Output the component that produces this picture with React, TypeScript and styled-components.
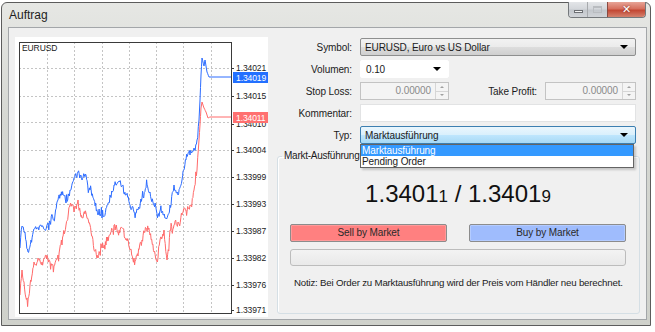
import React from "react";
import styled, { createGlobalStyle } from "styled-components";

const GlobalStyle = createGlobalStyle`
  html, body {
    margin: 0;
    padding: 0;
    background: #ffffff;
  }
  body {
    font-family: "Liberation Sans", Arial, sans-serif;
    font-size: 10px;
    letter-spacing: -0.1px;
    color: #1b1b1b;
  }
  * {
    box-sizing: border-box;
  }
`;

const Window = styled.div`
  width: 650px;
  height: 324px;
  margin: 2px 0 0 1px;
  border: 1px solid #5c5c5c;
  border-radius: 6px 6px 0 0;
  background: linear-gradient(180deg, #e6e7e4 0%, #d6d8d3 35%, #cfd1cb 100%);
  display: flex;
  flex-direction: column;
  padding: 0 3px 5px 6px;
`;

const TitleBar = styled.div`
  height: 24px;
  display: flex;
  align-items: flex-start;
  flex-shrink: 0;
`;

const Title = styled.span`
  font-size: 12px;
  line-height: 14px;
  letter-spacing: 0;
  padding: 5px 0 0 1px;
  color: #1e1e1e;
`;

const CaptionButtons = styled.div`
  margin: -1px 1px 0 auto;
  display: flex;
  height: 16px;
  border: 1px solid #74787b;
  border-top: none;
  border-radius: 0 0 4px 4px;
  overflow: hidden;
`;

const CaptionButton = styled.div<{ $close?: boolean; $w: number }>`
  width: ${({ $w }) => $w}px;
  height: 100%;
  display: flex;
  align-items: center;
  justify-content: center;
  border-left: ${({ $close }) => ($close ? "1px solid #8a4a40" : "1px solid #a7aaad")};
  background: ${({ $close }) =>
    $close
      ? "linear-gradient(180deg, #e7a497 0%, #d6705e 45%, #c34733 55%, #d4826e 100%)"
      : "linear-gradient(180deg, #e3e5e8 0%, #d4d7db 45%, #c3c7cc 55%, #d1d4d8 100%)"};
  &:first-child {
    border-left: none;
  }
`;

const MinGlyph = styled.span`
  width: 9px;
  height: 3px;
  margin-top: 4px;
  background: #f4f4f4;
  border: 1px solid #6c6f73;
`;

const MaxGlyph = styled.span`
  width: 9px;
  height: 7px;
  border: 1px solid #b9bcc0;
  border-top-width: 2px;
`;

const CloseGlyph = styled.span`
  color: #ffffff;
  font-family: "DejaVu Sans", sans-serif;
  font-weight: bold;
  font-size: 11px;
  line-height: 11px;
  text-shadow: 0 0 2px #7a2418;
`;

const Client = styled.div`
  flex: 1;
  min-width: 0;
  display: flex;
  background: #f0f0f0;
  border: 1px solid #a3a6a9;
`;

const ChartPanel = styled.div`
  width: 253px;
  height: 280px;
  margin: 9px 0 0 6px;
  background: #ffffff;
  flex-shrink: 0;
`;

const FormPanel = styled.div`
  flex: 1;
  min-width: 0;
  display: flex;
  flex-direction: column;
  padding: 10px 6px 0 9px;
`;

const FormGrid = styled.div`
  display: grid;
  grid-template-columns: 75px minmax(0, 1fr);
  grid-auto-rows: 18px;
  column-gap: 8px;
  row-gap: 4px;
  margin-right: 4px;
`;

const Label = styled.label`
  display: flex;
  align-items: center;
  justify-content: flex-end;
  white-space: nowrap;
  color: #1b1b1b;
`;

const Combo = styled.div<{ $focus?: boolean; $w?: number }>`
  position: relative;
  width: ${({ $w }) => ($w ? `${$w}px` : "100%")};
  height: 18px;
  display: flex;
  align-items: center;
  padding: 0 4px;
  border: 1px solid ${({ $focus }) => ($focus ? "#3c7fb1" : "#8e8f8f")};
  border-radius: 2px;
  background: ${({ $focus }) =>
    $focus
      ? "linear-gradient(180deg, #eaf6fd 0%, #d9f0fc 50%, #bee6fd 51%, #a7d9f5 100%)"
      : "linear-gradient(180deg, #f2f2f2 0%, #ebebeb 50%, #dddddd 51%, #cfcfcf 100%)"};
`;

const PlainCombo = styled(Combo)`
  border-color: #ffffff;
  background: #ffffff;
  padding-left: 5px;
`;

const Arrow = styled.span`
  margin-left: auto;
  margin-right: 3px;
  width: 0;
  height: 0;
  border-left: 4px solid transparent;
  border-right: 4px solid transparent;
  border-top: 4px solid #000000;
`;

const DropList = styled.div`
  position: absolute;
  top: 17px;
  left: -1px;
  right: 1px;
  background: #ffffff;
  border: 1px solid #646464;
  box-shadow: 2px 2px 2px rgba(0, 0, 0, 0.18);
  z-index: 5;
`;

const DropItem = styled.div<{ $active?: boolean }>`
  height: 11px;
  line-height: 11px;
  padding-left: 1px;
  color: ${({ $active }) => ($active ? "#ffffff" : "#1b1b1b")};
  background: ${({ $active }) => ($active ? "#3399ff" : "transparent")};
`;

const SpinRow = styled.div`
  display: flex;
  align-items: center;
  gap: 8px;
`;

const SpinInput = styled.div<{ $w: number }>`
  width: ${({ $w }) => $w}px;
  height: 18px;
  display: flex;
  border: 1px solid #c3c3c3;
  background: #f4f4f4;
  flex-shrink: 0;
`;

const SpinValue = styled.span`
  flex: 1;
  text-align: right;
  padding-right: 4px;
  line-height: 16px;
  color: #8a8a8a;
`;

const SpinButtons = styled.div`
  width: 13px;
  display: flex;
  flex-direction: column;
  border-left: 1px solid #d6d6d6;
`;

const SpinHalf = styled.div<{ $down?: boolean }>`
  flex: 1;
  display: flex;
  align-items: center;
  justify-content: center;
  border-top: ${({ $down }) => ($down ? "1px solid #d6d6d6" : "none")};
  &::after {
    content: "";
    border-left: 2px solid transparent;
    border-right: 2px solid transparent;
    ${({ $down }) => ($down ? "border-top: 2px solid #a0a0a0;" : "border-bottom: 2px solid #a0a0a0;")}
  }
`;

const InlineLabel = styled(Label)`
  flex: 1;
  height: 18px;
`;

const TextInput = styled.div`
  height: 18px;
  background: #ffffff;
  border: 1px solid #e2e3e4;
`;

const Group = styled.fieldset`
  margin: 6px 0 0 0;
  padding: 0 13px 0 12px;
  min-width: 0;
  border: 1px solid #d5dfe5;
  border-radius: 3px;
  box-shadow: inset 1px 1px 0 #ffffff;
  height: 164px;
  display: flex;
  flex-direction: column;
`;

const Legend = styled.legend`
  padding: 0 2px;
  margin-left: -8px;
  line-height: 12px;
  letter-spacing: -0.25px;
  color: #1b1b1b;
`;

const Price = styled.div`
  margin-top: 19px;
  text-align: center;
  font-size: 24px;
  line-height: 26px;
  letter-spacing: 0;
  color: #111111;
`;

const PriceTail = styled.span`
  font-size: 17px;
`;

const ButtonRow = styled.div`
  margin-top: 14px;
  display: flex;
  justify-content: space-between;
`;

const TradeButton = styled.div<{ $kind: "sell" | "buy" }>`
  width: 157px;
  height: 18px;
  line-height: 16px;
  text-align: center;
  border: 1px solid #8c8c8c;
  border-radius: 2px;
  color: #2a2a2a;
  background: ${({ $kind }) => ($kind === "sell" ? "#ff8080" : "#9fbcfd")};
  box-shadow: inset 0 0 0 1px ${({ $kind }) => ($kind === "sell" ? "#ff9a9a" : "#b4ccff")};
`;

const Progress = styled.div`
  margin-top: 7px;
  height: 17px;
  border: 1px solid #bcbcbc;
  border-radius: 3px;
  background: linear-gradient(180deg, #f3f3f3 0%, #e9e9e9 100%);
`;

const Note = styled.div`
  margin: 11px 0 0 4px;
  font-size: 9.7px;
  line-height: 12px;
  white-space: nowrap;
  letter-spacing: -0.2px;
  color: #1b1b1b;
`;

// chart data: hand-traced key points, roughened with a seeded jitter
const blueKeys: [number, number][] = [
  [20, 248], [22, 226], [25, 232], [28, 252], [31, 240], [35, 228], [40, 226], [45, 230],
  [50, 222], [55, 215], [58, 200], [62, 195], [66, 203], [70, 190], [74, 178], [78, 172],
  [82, 180], [86, 175], [90, 190], [94, 200], [98, 215], [102, 218], [106, 208], [110, 195],
  [114, 185], [118, 182], [122, 186], [126, 195], [130, 205], [134, 212], [138, 210], [142, 198],
  [146, 188], [150, 192], [154, 205], [158, 215], [162, 212], [166, 218], [170, 205], [174, 185],
  [178, 195], [182, 180], [186, 160], [190, 155], [194, 148], [197, 140], [199, 120], [200, 100],
  [201, 75], [202, 58], [204, 66], [205, 60], [207, 72], [209, 77], [232, 77],
];

const redKeys: [number, number][] = [
  [20, 295], [22, 270], [24, 282], [27, 298], [30, 285], [34, 262], [38, 258], [42, 262],
  [46, 255], [50, 262], [54, 266], [58, 255], [62, 245], [66, 225], [70, 205], [74, 212],
  [78, 200], [82, 218], [86, 213], [90, 225], [94, 250], [98, 258], [102, 248], [106, 245],
  [110, 235], [114, 225], [118, 232], [122, 228], [126, 240], [130, 250], [134, 258], [138, 256],
  [142, 240], [146, 228], [150, 235], [154, 252], [158, 258], [160, 240], [164, 230], [167, 260],
  [170, 230], [174, 225], [178, 222], [182, 215], [186, 210], [190, 205], [194, 190], [197, 170],
  [199, 140], [200, 125], [201, 108], [202, 102], [204, 108], [206, 112], [208, 118], [210, 117],
  [232, 117],
];

const seeded = (seed: number) => () => {
  seed = (seed * 16807) % 2147483647;
  return seed / 2147483647;
};

const buildLine = (keys: [number, number][], seed: number) => {
  const rnd = seeded(seed);
  const pts: string[] = [];
  let drift = 0;
  for (let i = 0; i < keys.length - 1; i++) {
    const [x0, y0] = keys[i];
    const [x1, y1] = keys[i + 1];
    const steps = x1 - x0 > 12 ? 1 : Math.max(2, Math.round((x1 - x0) / 0.6));
    for (let s = 0; s < steps; s++) {
      const t = s / steps;
      const x = x0 + (x1 - x0) * t;
      let jitter = 0;
      if (x < 198 && s > 0) {
        drift = drift * 0.6 + (rnd() - 0.5) * 7;
        jitter = drift + (rnd() < 0.12 ? (rnd() - 0.5) * 14 : 0);
      }
      pts.push(`${x.toFixed(1)},${(y0 + (y1 - y0) * t + jitter).toFixed(1)}`);
    }
  }
  const last = keys[keys.length - 1];
  pts.push(`${last[0]},${last[1]}`);
  return pts.join(" ");
};

const gridY = [68, 96, 122, 150, 177, 204, 231, 258, 285];
const gridX = [47, 74, 102, 129, 156, 183, 211];
const axisLabels: [number, string][] = [
  [68, "1.34021"], [96, "1.34015"], [124, "1.34010"], [150, "1.34004"], [177, "1.33999"],
  [204, "1.33993"], [231, "1.33987"], [258, "1.33982"], [285, "1.33976"], [310, "1.33971"],
];

const Chart = () => {
  const blue = buildLine(blueKeys, 7);
  const red = buildLine(redKeys, 13);
  return (
    <svg width="253" height="280" viewBox="15 37 253 280" fontFamily="Liberation Sans, Arial, sans-serif">
      {gridY.map((y) => (
        <line key={`h${y}`} x1="19" x2="231" y1={y + 0.5} y2={y + 0.5} stroke="#c4c4c4" strokeDasharray="2 2" />
      ))}
      {gridX.map((x) => (
        <line key={`v${x}`} x1={x + 0.5} x2={x + 0.5} y1="42" y2="313" stroke="#c4c4c4" strokeDasharray="2 2" />
      ))}
      <polyline points={red} fill="none" stroke="#ff6a6a" strokeWidth="1" />
      <polyline points={blue} fill="none" stroke="#2c6cff" strokeWidth="1" />
      <rect x="19.5" y="42.5" width="212" height="271" fill="none" stroke="#3a3a3a" />
      <text x="22" y="51" fontSize="8.5" fill="#1b1b1b">EURUSD</text>
      {axisLabels.map(([y, t]) => (
        <g key={t}>
          <line x1="231" x2="234" y1={y + 0.5} y2={y + 0.5} stroke="#3a3a3a" />
          <text x="236" y={y + 3} fontSize="8.5" fill="#222">{t}</text>
        </g>
      ))}
      <rect x="233" y="72" width="35" height="11" fill="#2370ff" />
      <text x="236" y="80.5" fontSize="8.5" fill="#ffffff">1.34019</text>
      <rect x="233" y="112" width="35" height="11" fill="#ff7070" />
      <text x="236" y="120.5" fontSize="8.5" fill="#ffffff">1.34011</text>
    </svg>
  );
};

const App = () => {
  return (
    <>
      <GlobalStyle />
      <Window>
        <TitleBar>
          <Title>Auftrag</Title>
          <CaptionButtons>
            <CaptionButton $w={18}>
              <MinGlyph />
            </CaptionButton>
            <CaptionButton $w={20}>
              <MaxGlyph />
            </CaptionButton>
            <CaptionButton $w={38} $close>
              <CloseGlyph>✕</CloseGlyph>
            </CaptionButton>
          </CaptionButtons>
        </TitleBar>
        <Client>
          <ChartPanel>
            <Chart />
          </ChartPanel>
          <FormPanel>
            <FormGrid>
              <Label>Symbol:</Label>
              <Combo>
                EURUSD, Euro vs US Dollar
                <Arrow />
              </Combo>
              <Label>Volumen:</Label>
              <PlainCombo $w={89}>
                0.10
                <Arrow />
              </PlainCombo>
              <Label>Stop Loss:</Label>
              <SpinRow>
                <SpinInput $w={89}>
                  <SpinValue>0.00000</SpinValue>
                  <SpinButtons>
                    <SpinHalf />
                    <SpinHalf $down />
                  </SpinButtons>
                </SpinInput>
                <InlineLabel>Take Profit:</InlineLabel>
                <SpinInput $w={91}>
                  <SpinValue>0.00000</SpinValue>
                  <SpinButtons>
                    <SpinHalf />
                    <SpinHalf $down />
                  </SpinButtons>
                </SpinInput>
              </SpinRow>
              <Label>Kommentar:</Label>
              <TextInput />
              <Label>Typ:</Label>
              <Combo $focus>
                Marktausführung
                <Arrow />
                <DropList>
                  <DropItem $active>Marktausführung</DropItem>
                  <DropItem>Pending Order</DropItem>
                </DropList>
              </Combo>
            </FormGrid>
            <Group>
              <Legend>Markt-Ausführung</Legend>
              <Price>
                1.3401<PriceTail>1</PriceTail> / 1.3401<PriceTail>9</PriceTail>
              </Price>
              <ButtonRow>
                <TradeButton $kind="sell">Sell by Market</TradeButton>
                <TradeButton $kind="buy">Buy by Market</TradeButton>
              </ButtonRow>
              <Progress />
              <Note>Notiz: Bei Order zu Marktausführung wird der Preis vom Händler neu berechnet.</Note>
            </Group>
          </FormPanel>
        </Client>
      </Window>
    </>
  );
};

export default App;
